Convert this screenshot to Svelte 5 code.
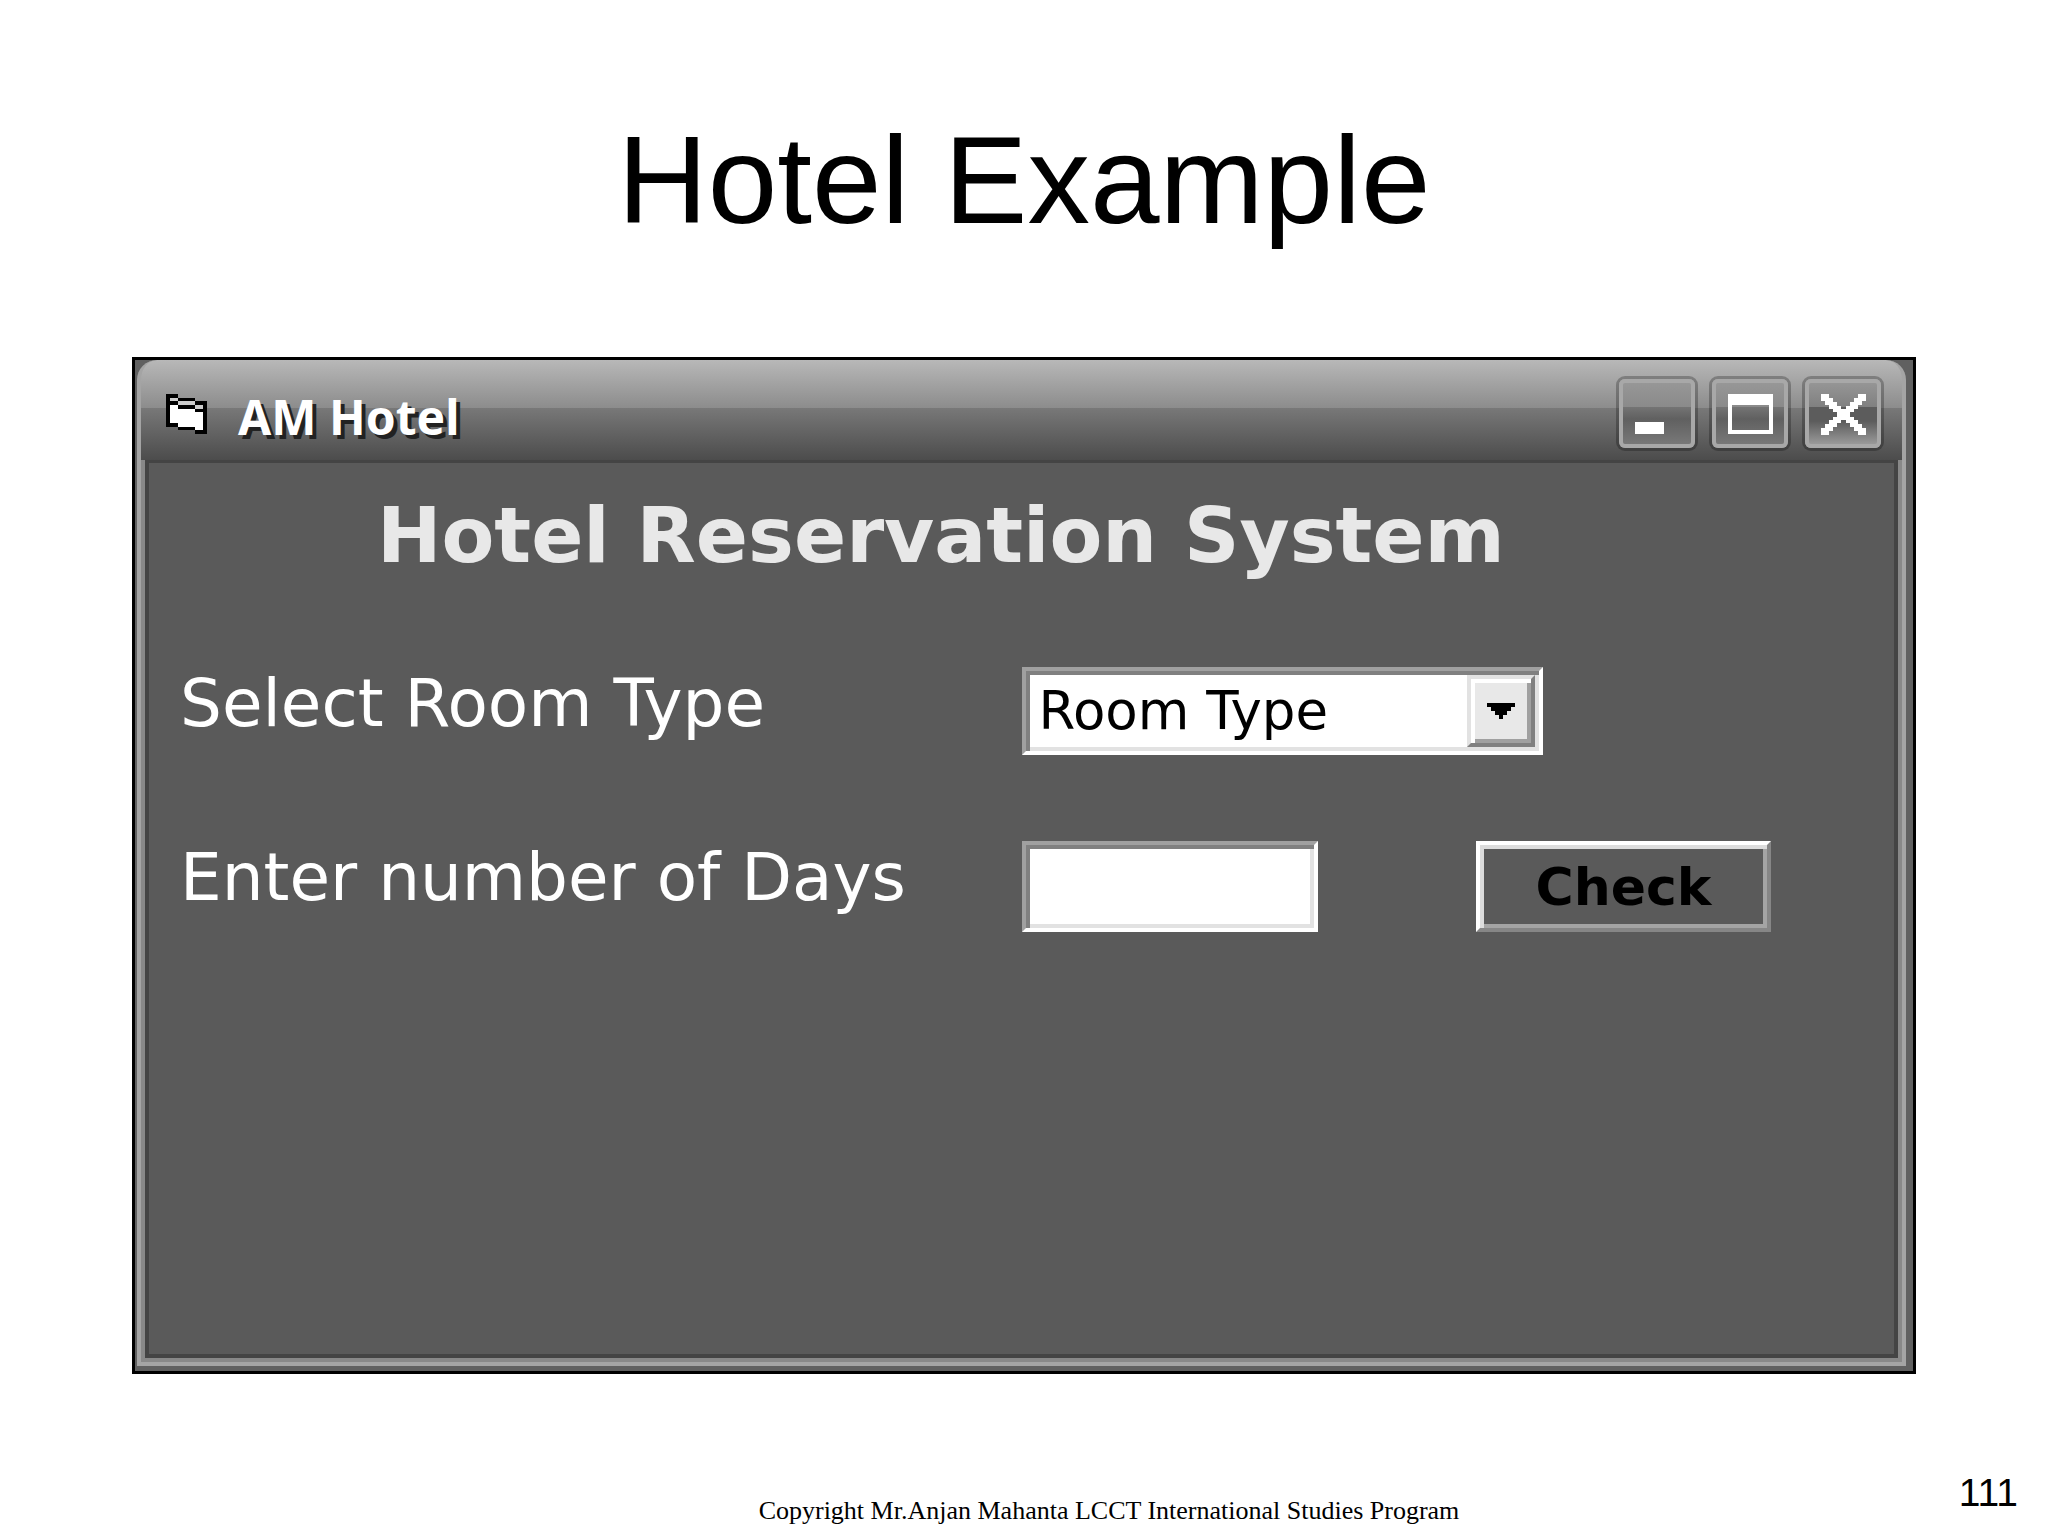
<script>
    const roomTypes = ['Room Type', 'Single', 'Double', 'Suite'];

    let roomType = $state('Room Type');
    let days = $state('');

    function handleSubmit(event) {
        event.preventDefault();
    }
</script>

<main class="slide">
    <h1>Hotel Example</h1>

    <section class="window">
        <div class="frame">
            <header class="title-bar">
                <svg class="app-icon" viewBox="0 0 10 11" preserveAspectRatio="none" shape-rendering="crispEdges" aria-hidden="true">
                    <path fill="#000" d="M0 0h3v1h4v1h3v9H7v-1H3V9H0z" />
                    <path fill="#fff" d="M1 3h2v1h4v1h2v5H7V9H3V8H1z" />
                    <path fill="#ccc" d="M1 1h2v1H1zM3 2h4v1H3zM7 3h2v1H7z" />
                </svg>
                <h2>AM Hotel</h2>
                <div class="window-buttons">
                    <button type="button" aria-label="Minimize">
                        <svg viewBox="0 3 76 69" shape-rendering="crispEdges" aria-hidden="true">
                            <path d="M16 46h29v12H16z" />
                        </svg>
                    </button>
                    <button type="button" aria-label="Maximize">
                        <svg viewBox="0 3 76 69" shape-rendering="crispEdges" aria-hidden="true">
                            <path fill-rule="evenodd" d="M16 18h45v40H16zM20 29v25h37V29z" />
                        </svg>
                    </button>
                    <button type="button" class="close" aria-label="Close">
                        <svg viewBox="0 3 76 69" shape-rendering="crispEdges" aria-hidden="true">
                            <path d="M16 18h8v4h4v4h4v4h4v3h5v-3h4v-4h4v-4h4v-4h8v7h-4v4h-4v4h-4v3h-4v5h4v3h4v4h4v4h4v7h-8v-4h-4v-4h-4v-4h-4v-3h-5v3h-4v4h-4v4h-4v4h-8v-7h4v-4h4v-4h4v-3h4v-5h-4v-3h-4v-4h-4v-4h-4z" />
                        </svg>
                    </button>
                </div>
            </header>

            <form class="content" onsubmit={handleSubmit}>
                <h3>Hotel Reservation System</h3>

                <div class="row">
                    <label for="room-type">Select Room Type</label>
                    <div class="combo">
                        <select id="room-type" bind:value={roomType}>
                            {#each roomTypes as type}
                                <option value={type}>{type}</option>
                            {/each}
                        </select>
                        <span class="arrow">
                            <svg viewBox="0 0 28 16" shape-rendering="crispEdges" aria-hidden="true">
                                <path d="M0 0h28v4h-4v4h-4v4h-4v4h-4v-4H8V8H4V4H0z" />
                            </svg>
                        </span>
                    </div>
                </div>

                <div class="row">
                    <label for="days">Enter number of Days</label>
                    <input id="days" type="text" bind:value={days} />
                    <button type="submit" class="check">Check</button>
                </div>
            </form>
        </div>
    </section>

    <footer>
        <p>Copyright Mr.Anjan Mahanta LCCT International Studies Program</p>
        <span class="page-number">111</span>
    </footer>
</main>

<style>
    :global(body) {
        margin: 0;
        background: #fff;
    }
    .slide {
        color: #000;
        font-family: "Liberation Sans", Arial, sans-serif;
    }
    h1, h2, h3, p {
        margin: 0;
    }
    h1 {
        padding: 108px 0 105px;
        font-size: 125px;
        font-weight: 400;
        line-height: 144px;
        text-align: center;
    }
    .window {
        margin: 0 132px;
        padding: 0 7px 5px 2px;
        border: 3px solid #000;
        background: #606060;
    }
    .frame {
        border: 4px solid #a4a4a4;
        border-top: 0;
        border-radius: 20px 20px 0 0;
        background: linear-gradient(#b8b8b8, #8c8c8c 48px, #787878 48px, #4c4c4c 100px, #888 100px);
    }
    .title-bar {
        display: flex;
        align-items: center;
        height: 100px;
        padding: 0 21px 0 25px;
    }
    .app-icon {
        width: 41px;
        height: 40px;
        margin-top: 8px;
    }
    h2 {
        flex: 1;
        padding: 14px 0 0 31px;
        color: #fff;
        font-family: "Noto Sans", sans-serif;
        font-size: 48px;
        font-weight: 700;
        line-height: 60px;
        text-shadow: 4px 4px 0 #222;
    }
    .window-buttons {
        display: flex;
        gap: 17px;
        padding-top: 7px;
    }
    .window-buttons button {
        width: 76px;
        height: 69px;
        padding: 0;
        border: 0;
        border-radius: 6px;
        background: linear-gradient(#999, #8a8a8a 28px, #747474 28px, #606060 40px, #7c7c7c);
        box-shadow: inset 0 0 0 4px #a8a8a8, 0 0 0 3px rgba(0, 0, 0, 0.25);
    }
    .window-buttons .close {
        background: linear-gradient(#999, #808080 28px, #5c5c5c 28px, #5c5c5c 42px, #a4a4a4);
    }
    .window-buttons svg {
        display: block;
        fill: #fff;
    }
    .content {
        box-sizing: border-box;
        min-height: 898px;
        margin: 0 4px 4px;
        padding: 28px 31px 0;
        border: 4px solid #444;
        border-top-width: 3px;
        background: #5a5a5a;
        color: #fff;
        font-family: "DejaVu Sans", Verdana, sans-serif;
    }
    h3 {
        padding-left: 197px;
        margin-bottom: 86px;
        color: #e8e8e8;
        font-size: 77px;
        line-height: 90px;
    }
    .row {
        display: grid;
        grid-template-columns: 50% 27% 23%;
        align-items: start;
        margin-bottom: 86px;
    }
    label {
        font-size: 66px;
        line-height: 74px;
        white-space: nowrap;
    }
    .combo {
        position: relative;
        grid-column: span 2;
        width: 521px;
    }
    select,
    input {
        box-sizing: border-box;
        display: block;
        margin: 0;
        border: 4px solid;
        border-color: #a0a0a0 #fff #fff #a0a0a0;
        border-radius: 0;
        background: #fff;
        box-shadow: inset 4px 4px #808080, inset -4px -4px #e2e2e2;
        color: #000;
        font-family: inherit;
        font-size: 53px;
    }
    select {
        width: 100%;
        height: 88px;
        padding: 0 76px 2px 13px;
        appearance: none;
    }
    input {
        width: 296px;
        height: 91px;
        padding: 0 12px;
    }
    .arrow {
        position: absolute;
        top: 8px;
        right: 8px;
        bottom: 8px;
        box-sizing: border-box;
        display: flex;
        align-items: center;
        justify-content: center;
        width: 68px;
        border: 4px solid;
        border-color: #e2e2e2 #808080 #808080 #e2e2e2;
        background: #e8e8e8;
        box-shadow: inset 4px 4px #fff, inset -4px -4px #a0a0a0;
        pointer-events: none;
    }
    .arrow svg {
        width: 28px;
        height: 16px;
    }
    .check {
        box-sizing: border-box;
        width: 295px;
        height: 91px;
        padding: 0;
        border: 4px solid;
        border-color: #fff #868686 #868686 #fff;
        background: #5a5a5a;
        box-shadow: inset 4px 4px #dcdcdc, inset -4px -4px #a4a4a4;
        color: #000;
        font-family: inherit;
        font-size: 52px;
        font-weight: 700;
    }
    footer {
        display: grid;
        grid-template-columns: 1fr auto 1fr;
        align-items: end;
        padding: 96px 30px 6px;
    }
    footer p {
        grid-column: 2;
        padding-left: 170px;
        font-family: "Liberation Serif", "Times New Roman", serif;
        font-size: 26px;
        line-height: 32px;
    }
    .page-number {
        padding-bottom: 11px;
        font-size: 39px;
        line-height: 46px;
        text-align: right;
    }
</style>
